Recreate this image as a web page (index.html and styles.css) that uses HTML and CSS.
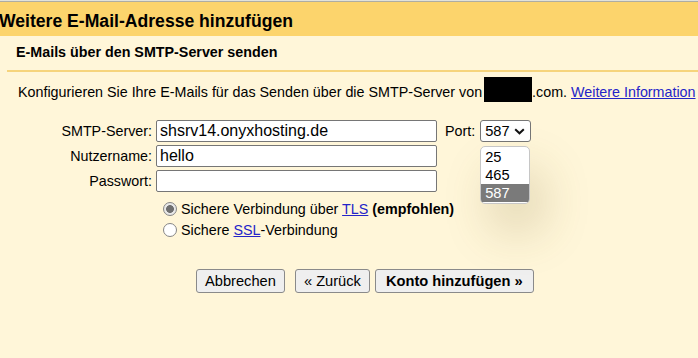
FILE: index.html
```html
<!DOCTYPE html>
<html>
<head>
    <title>Weitere E-Mail-Adresse hinzufügen</title>
    <link rel="stylesheet" href="styles.css">
</head>
<body>
    <div class="top-rule"></div>

    <!-- Titelleiste -->
    <div class="title-bar">
        <h1>Weitere E-Mail-Adresse hinzufügen</h1>
    </div>

    <div class="panel">
        <h2>E-Mails über den SMTP-Server senden</h2>
        <div class="divider"></div>

        <p class="intro">Konfigurieren Sie Ihre E-Mails für das Senden über die SMTP-Server von<span class="redacted"></span>.com. <a href="#">Weitere Information</a></p>

        <!-- SMTP-Formular -->
        <div class="smtp-form">
            <label class="field-label">SMTP-Server:</label>
            <input class="text-input" type="text" value="shsrv14.onyxhosting.de">
            <div class="port">
                <span class="port-label">Port:</span>
                <div class="select-box">
                    <span>587</span>
                    <svg width="11" height="7" viewBox="0 0 11 7"><path d="M1.2 1.2 L5.5 5.3 L9.8 1.2" fill="none" stroke="#111" stroke-width="2"/></svg>
                    <ul class="select-list">
                        <li>25</li>
                        <li>465</li>
                        <li class="selected">587</li>
                    </ul>
                </div>
            </div>

            <label class="field-label">Nutzername:</label>
            <input class="text-input" type="text" value="hello">
            <div></div>

            <label class="field-label">Passwort:</label>
            <input class="text-input" type="password" value="">
            <div></div>
        </div>

        <div class="security">
            <label class="radio-row">
                <input type="radio" name="sec" checked>
                <span>Sichere Verbindung über <a href="#">TLS</a> <b>(empfohlen)</b></span>
            </label>
            <label class="radio-row">
                <input type="radio" name="sec">
                <span>Sichere <a href="#">SSL</a>-Verbindung</span>
            </label>
        </div>

        <div class="actions">
            <button class="btn">Abbrechen</button>
            <button class="btn back">« Zurück</button>
            <button class="btn primary">Konto hinzufügen »</button>
        </div>
    </div>
</body>
</html>
```

FILE: styles.css
```css
:root {
    --title-bg: #fcd46c;
    --panel-bg: #fff6d9;
    --rule: #f6d47c;
    --link: #2424c8;
    --border: #767676;
}

html, body {
    margin: 0;
    height: 100%;
}

body {
    font-family: 'Liberation Sans', Arial, sans-serif;
    background: var(--panel-bg);
    color: #000;
    overflow: hidden;
}

.top-rule {
    height: 1px;
    background: #e2e2da;
    border-bottom: 1px solid #aeada2;
}

.title-bar {
    background: var(--title-bg);
    height: 34px;
}

.title-bar h1 {
    margin: 0 0 0 -1px;
    padding-top: 4px;
    line-height: 30px;
    font-size: 17.6px;
    font-weight: bold;
    white-space: nowrap;
}

.panel {
    padding-top: 7px;
}

.panel h2 {
    margin: 0;
    padding-left: 16px;
    font-size: 14.3px;
    line-height: 18px;
    font-weight: bold;
}

.divider {
    height: 2px;
    background: var(--rule);
    margin: 9px 0 0 7px;
}

.intro {
    margin: 5px 0 0;
    padding-left: 18px;
    font-size: 14.3px;
    line-height: 18px;
    white-space: nowrap;
}

.intro a,
.radio-row a {
    color: var(--link);
}

.redacted {
    display: inline-block;
    width: 48px;
    height: 25px;
    background: #000;
    margin-left: 2px;
    vertical-align: -5px;
}

.smtp-form {
    display: grid;
    grid-template-columns: 152px 281px auto;
    column-gap: 4px;
    row-gap: 3px;
    margin-top: 18px;
}

.field-label {
    text-align: right;
    font-size: 14.3px;
    line-height: 18px;
    padding-top: 2px;
}

.text-input {
    box-sizing: border-box;
    height: 22px;
    margin: 0;
    padding: 0 3px;
    border: 1px solid var(--border);
    border-radius: 2px;
    background: #fff;
    font-family: inherit;
    font-size: 16px;
}

.port {
    display: flex;
    align-items: flex-start;
    padding-left: 4px;
    gap: 5px;
}

.port-label {
    font-size: 14.3px;
    line-height: 18px;
    padding-top: 2px;
}

.select-box {
    position: relative;
    box-sizing: border-box;
    width: 51px;
    height: 22px;
    border: 1px solid var(--border);
    border-radius: 3px;
    background: #fff;
    display: flex;
    align-items: center;
    justify-content: space-between;
    padding: 0 5px 0 4px;
    font-size: 14.67px;
}

.select-list {
    position: absolute;
    top: 25px;
    left: -1px;
    width: 48px;
    margin: 0;
    padding: 1px 0;
    list-style: none;
    background: #fff;
    border: 1px solid #c6c6c6;
    border-radius: 5px;
    overflow: hidden;
    box-shadow: 12px 26px 48px rgba(110, 90, 30, 0.22);
}

.select-list li {
    height: 18px;
    line-height: 18px;
    padding-left: 4px;
    font-size: 14.67px;
}

.select-list li.selected {
    background: #7a7a7a;
    color: #fff;
}

.security {
    margin: 8px 0 0 163px;
    display: flex;
    flex-direction: column;
    gap: 3px;
}

.radio-row {
    display: flex;
    align-items: center;
    gap: 4px;
    font-size: 14.3px;
    line-height: 18px;
}

.radio-row input {
    appearance: none;
    box-sizing: border-box;
    width: 14px;
    height: 14px;
    margin: 0;
    border: 1px solid #858585;
    border-radius: 50%;
    background: #fff;
}

.radio-row input:checked {
    background: radial-gradient(circle, #6f6f6f 0 3.6px, #e8e8e8 4.2px);
}

.actions {
    display: flex;
    margin: 30px 0 0 196px;
}

.btn {
    height: 24px;
    padding: 0 8px;
    margin: 0;
    border: 1px solid #8a8a8a;
    border-radius: 3px;
    background: #efefef;
    font-family: inherit;
    font-size: 14.67px;
    color: #000;
}

.btn.back {
    margin-left: 10px;
}

.btn.primary {
    margin-left: 5px;
    padding: 0 10px;
    font-weight: bold;
}
```
